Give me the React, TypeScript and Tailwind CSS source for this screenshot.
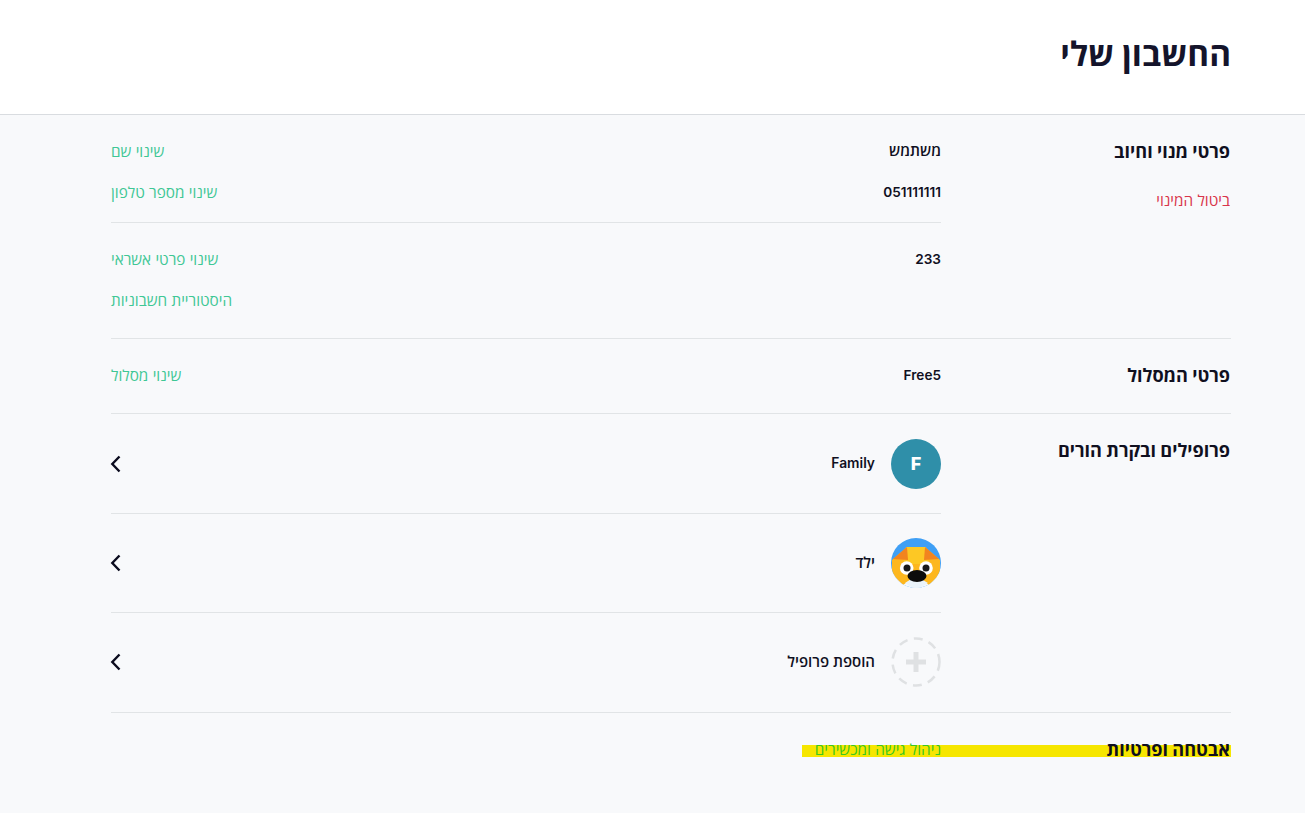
import React from "react";

function Chevron() {
  return (
    <svg width="12" height="18" viewBox="0 0 12 18" fill="none" className="shrink-0 overflow-visible">
      <path d="M8.5 1.5L1.3 9L8.5 16.5" stroke="#0b0b1e" strokeWidth="2.4" />
    </svg>
  );
}

function Dog() {
  return (
    <svg width="50" height="50" viewBox="0 0 50 50" className="shrink-0">
      <defs>
        <clipPath id="dogc"><circle cx="25" cy="25" r="25" /></clipPath>
      </defs>
      <g clipPath="url(#dogc)">
        <rect width="50" height="50" fill="#3f9ff5" />
        <path d="M0 37H50V50H0Z" fill="#f8f9fb" />
        <path d="M16 9H34L49 22V36L38 47L25 38L12 47L1 36V22Z" fill="#fdb71e" />
        <path d="M15 9H35L38 26H12Z" fill="#fdc824" />
        <path d="M2 21L16 9L17 22Z" fill="#f2841f" />
        <path d="M48 21L34 9L33 22Z" fill="#f2841f" />
        <path d="M14 45L25 38L37 45L25 52Z" fill="#eaf4fb" />
        <circle cx="15.7" cy="30" r="6.8" fill="#fff" />
        <circle cx="35" cy="30" r="6.8" fill="#fff" />
        <circle cx="16" cy="30" r="3.5" fill="#1a1a1a" />
        <circle cx="35" cy="30" r="3.5" fill="#1a1a1a" />
        <ellipse cx="26" cy="38" rx="9.5" ry="6" fill="#0c0c0c" />
      </g>
    </svg>
  );
}

function AddIcon() {
  return (
    <svg width="50" height="50" viewBox="0 0 50 50" className="shrink-0">
      <circle cx="25" cy="25" r="23.5" fill="none" stroke="#dfe1e3" strokeWidth="2.5" strokeDasharray="9 6.4" />
      <path d="M25 15V35M15 25H35" stroke="#dfe1e3" strokeWidth="5" />
    </svg>
  );
}

function Row({ value, action, latin }: { value?: string; action: string; latin?: boolean }) {
  return (
    <div className="flex h-[41px] items-center justify-between">
      <span className={`font-semibold text-[#10101f] ${latin ? "text-[13.6px]" : "text-[15px]"}`}>{value}</span>
      <a className="mt-[2px] text-[15.3px] text-[#3fc795]">{action}</a>
    </div>
  );
}

function ProfileRow({ icon, name, h, latin, nameClass }: { icon: React.ReactNode; name: string; h: string; latin?: boolean; nameClass?: string }) {
  return (
    <div className={`flex ${h} items-center justify-between border-b border-[#e1e4e6] last:border-b-0`}>
      <div className="flex items-center gap-4">
        {icon}
        <span className={`font-semibold text-[#10101f] ${latin ? "text-[13.8px]" : "text-[15px]"} ${nameClass ?? ""}`}>{name}</span>
      </div>
      <Chevron />
    </div>
  );
}

export default function App() {
  return (
    <div dir="rtl" lang="he" className="min-h-[813px] bg-[#f8f9fb] font-['Inter','Open_Sans',sans-serif]">
      <header className="flex h-[115px] items-start border-b border-[#d9dce0] bg-white pl-[75px] pr-[74px] pt-[31px]">
        <h1 className="text-[33.3px] font-bold leading-[46px] text-[#14142b]">החשבון שלי</h1>
      </header>

      <main className="pr-[74px] pl-[111px]">
        <section className="flex border-b border-[#e1e4e6] pb-[17px] pt-[16px]">
          <div className="w-[290px] shrink-0 pr-px">
            <h2 className="text-[18.1px] font-bold leading-[41px] text-[#10101f]">פרטי מנוי וחיוב</h2>
            <a className="mt-[19px] block text-[15.3px] leading-[20px] text-[#d8354a]">ביטול המינוי</a>
          </div>
          <div className="flex-1">
            <div className="border-b border-[#e1e4e6] pb-[9px]">
              <Row value="משתמש" action="שינוי שם" />
              <Row value="051111111" action="שינוי מספר טלפון" latin />
            </div>
            <div className="pt-[16px]">
              <Row value="233" action="שינוי פרטי אשראי" latin />
              <Row action="היסטוריית חשבוניות" />
            </div>
          </div>
        </section>

        <section className="flex border-b border-[#e1e4e6] pt-[16px] pb-[17px]">
          <h2 className="w-[290px] shrink-0 pr-px text-[18.1px] font-bold leading-[41px] text-[#10101f]">פרטי המסלול</h2>
          <div className="flex-1">
            <Row value="Free5" action="שינוי מסלול" latin />
          </div>
        </section>

        <section className="flex border-b border-[#e1e4e6]">
          <div className="w-[290px] shrink-0 pr-px pt-[16px]">
            <h2 className="text-[18.1px] font-bold leading-[41px] text-[#10101f]">פרופילים ובקרת הורים</h2>
          </div>
          <div className="flex-1">
            <ProfileRow
              h="h-[100px]"
              name="Family"
              latin
              icon={
                <div className="flex h-[50px] w-[50px] shrink-0 items-center justify-center rounded-full bg-[#2f8fa9] text-[18px] font-extrabold text-white">
                  F
                </div>
              }
            />
            <ProfileRow h="h-[99px]" name="ילד" icon={<Dog />} />
            <ProfileRow h="h-[99px] pb-[2px]" nameClass="mt-[2px]" name="הוספת פרופיל" icon={<AddIcon />} />
          </div>
        </section>

        <section className="flex pt-[32px]">
          <div className="flex h-[12px] w-[429px] items-center bg-[#f6e600]">
            <h2 className="-mt-[4px] w-[290px] shrink-0 pr-px text-[18.1px] font-bold leading-[12px] text-[#10101f]">אבטחה ופרטיות</h2>
            <a className="-mt-[2px] text-[15.3px] leading-[12px] text-[#3cc81e]">ניהול גישה ומכשירים</a>
          </div>
        </section>
      </main>
    </div>
  );
}
